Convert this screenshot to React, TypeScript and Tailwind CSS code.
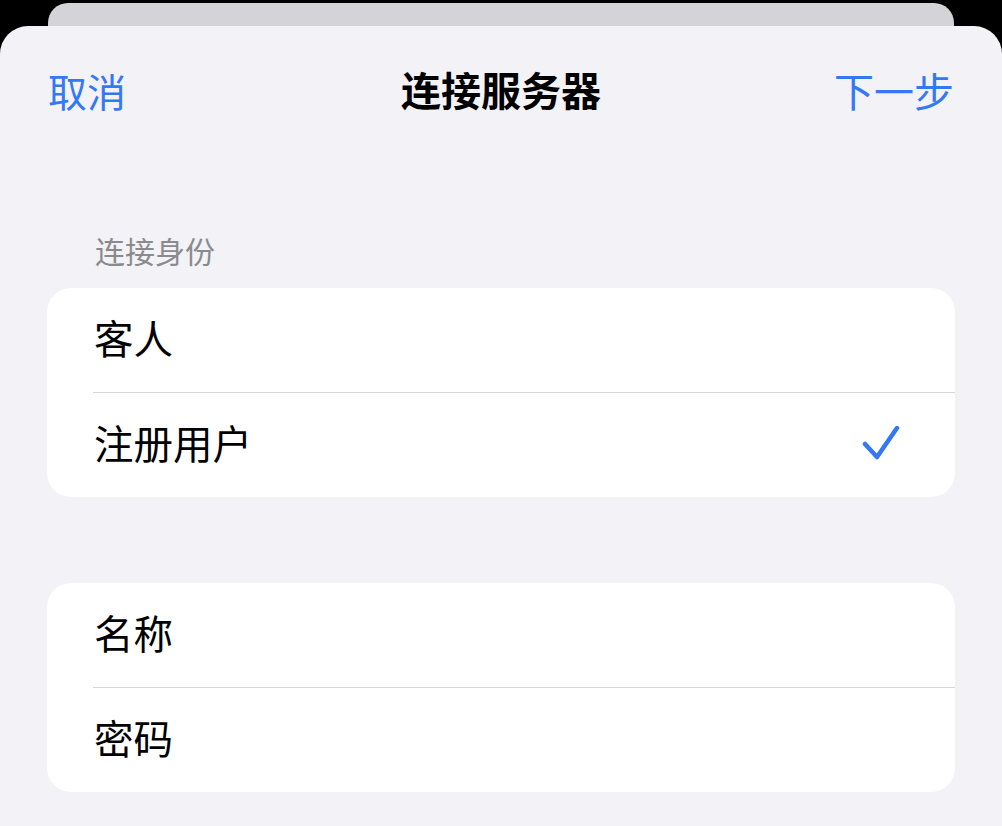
import React from "react";

const font = { fontFamily: '"Noto Sans CJK SC", "Noto Sans", sans-serif' };

function Row({ label, check }: { label: string; check?: boolean }) {
  return (
    <div className="flex h-[104px] items-center justify-between pl-[47px] pr-[54px]">
      <span className="pb-[6px] text-[39.5px] leading-[48px] text-black">{label}</span>
      {check && (
        <svg width="40" height="40" viewBox="0 0 40 40" fill="none">
          <path d="M4 19 L16 32 L36 3" stroke="#3478F6" strokeWidth="4.5" strokeLinecap="round" strokeLinejoin="round" />
        </svg>
      )}
    </div>
  );
}

function Sep() {
  return <div className="ml-[46px] h-px bg-[#d6d6db]" />;
}

export default function App() {
  return (
    <div className="w-[1002px] h-[826px] overflow-hidden bg-black" style={font}>
      <div className="mx-[48px] mt-[3px] h-[23px] rounded-t-[20px] bg-[#d3d3d8]" />
      <div className="h-[820px] rounded-t-[28px] bg-[#f2f2f7]">
        <div className="relative flex h-[134px] items-center justify-between px-[48px] pb-[7px]">
          <span className="text-[39px] leading-[48px] text-[#3478F6]">取消</span>
          <span className="absolute left-1/2 top-[39px] -translate-x-1/2 text-[40px] font-bold leading-[48px] text-black">连接服务器</span>
          <span className="text-[40px] leading-[48px] text-[#3478F6]">下一步</span>
        </div>
        <div className="h-[72px]" />
        <div className="mb-[20px] pl-[95px] text-[30px] leading-[36px] text-[#8a8a8e]">连接身份</div>
        <div className="mx-[47px] overflow-hidden rounded-[24px] bg-white">
          <Row label="客人" />
          <Sep />
          <Row label="注册用户" check />
        </div>
        <div className="h-[86px]" />
        <div className="mx-[47px] overflow-hidden rounded-[24px] bg-white">
          <Row label="名称" />
          <Sep />
          <Row label="密码" />
        </div>
      </div>
    </div>
  );
}
